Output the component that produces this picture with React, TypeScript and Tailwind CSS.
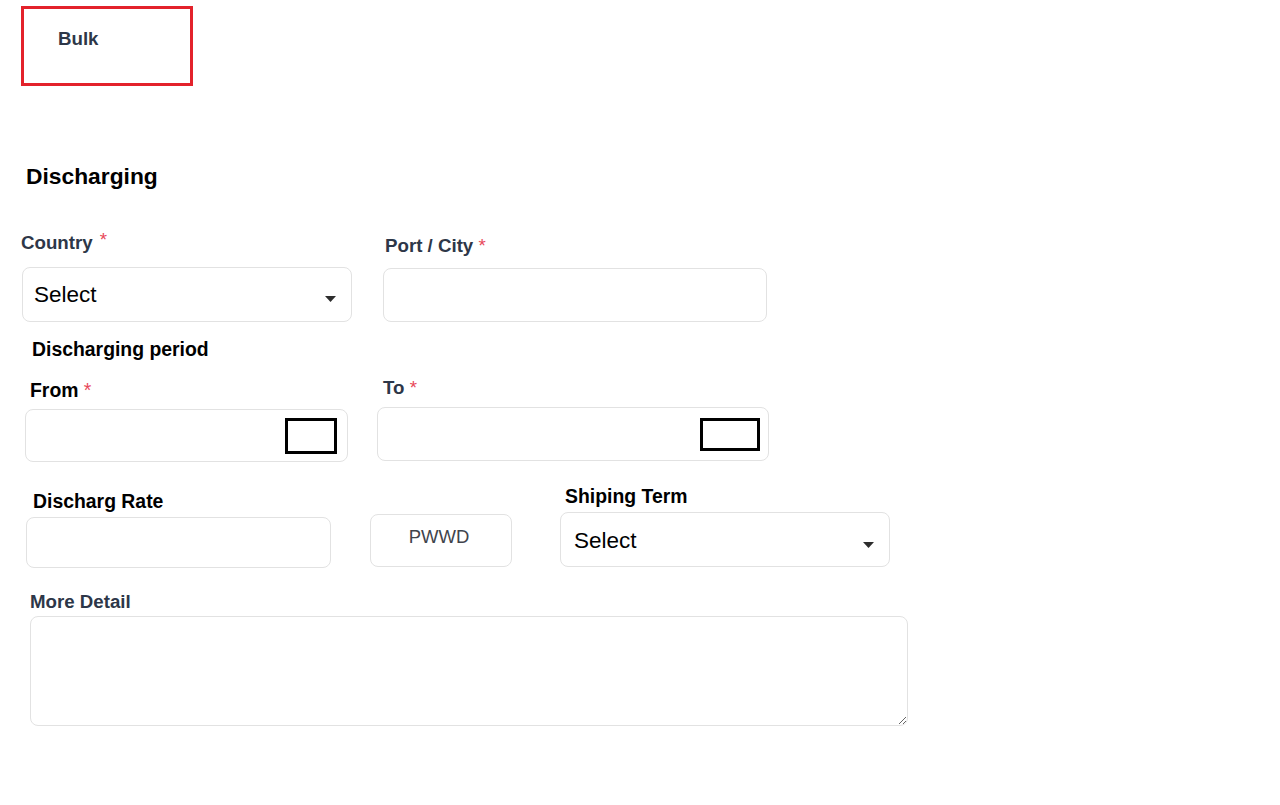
import React from "react";

const Star = () => (
  <span className="font-normal text-[#e8485a]"> *</span>
);

const Caret = () => (
  <svg width="11" height="6" viewBox="0 0 11 6" className="ml-auto mt-[12px] shrink-0">
    <path d="M0 0 L11 0 L5.5 6 Z" fill="#2d2d2d" />
  </svg>
);

export default function App() {
  return (
    <div
      className="w-full h-[805px] bg-white flex flex-col items-start overflow-hidden"
      style={{ fontFamily: '"Liberation Sans", Arial, sans-serif' }}
    >
      {/* Bulk box */}
      <div className="mt-[6px] ml-[21px] w-[172px] h-[80px] border-[3px] border-[#e3222b] pt-[21px] pl-[34px]">
        <div className="text-[18.7px] leading-none font-bold text-[#2d3748]">Bulk</div>
      </div>

      {/* Heading */}
      <div className="mt-[79px] ml-[26px] text-[22.8px] leading-none font-bold text-black">
        Discharging
      </div>

      {/* Country / Port row */}
      <div className="mt-[46px] flex items-start">
        <div className="ml-[21px] flex flex-col items-start">
          <div className="text-[18.7px] leading-none font-bold text-[#2d3748]">
            Country{" "}
            <span className="font-normal text-[#e8485a] relative top-[-3px] ml-[2px]">*</span>
          </div>
          <div className="mt-[14px] ml-[1px] w-[330px] h-[55px] border border-[#e2e2e2] rounded-lg flex items-start pt-[16px] pl-[11px] pr-[15px]">
            <span className="text-[22.5px] leading-none text-black">Select</span>
            <Caret />
          </div>
        </div>
        <div className="ml-[31px] mt-[3.5px] flex flex-col items-start">
          <div className="ml-[2px] text-[18.7px] leading-none font-bold text-[#2d3748]">
            Port / City
            <Star />
          </div>
          <div className="mt-[12px] w-[384px] h-[54px] border border-[#e2e2e2] rounded-lg" />
        </div>
      </div>

      {/* Discharging period */}
      <div className="mt-[17.5px] ml-[32px] text-[19.4px] leading-none font-bold text-black">
        Discharging period
      </div>

      {/* From / To row */}
      <div className="mt-[20px] flex items-start">
        <div className="ml-[25px] mt-[2px] flex flex-col items-start">
          <div className="ml-[5px] text-[19.4px] leading-none font-bold text-black">
            From
            <Star />
          </div>
          <div className="mt-[9px] w-[323px] h-[53px] border border-[#e2e2e2] rounded-lg flex justify-end items-start pt-[8px] pr-[10px]">
            <div className="w-[52px] h-[36px] border-[3px] border-black" />
          </div>
        </div>
        <div className="ml-[29px] flex flex-col items-start">
          <div className="ml-[6px] text-[18.7px] leading-none font-bold text-[#2d3748]">
            To
            <Star />
          </div>
          <div className="mt-[9.5px] w-[392px] h-[54px] border border-[#e2e2e2] rounded-lg flex justify-end items-start pt-[10px] pr-[8px]">
            <div className="w-[60px] h-[33px] border-[3px] border-black" />
          </div>
        </div>
      </div>

      {/* Rate / PWWD / Shipping row */}
      <div className="mt-[24.5px] flex items-start">
        <div className="ml-[26px] mt-[5px] flex flex-col items-start">
          <div className="ml-[7px] text-[19.4px] leading-none font-bold text-black">
            Discharg Rate
          </div>
          <div className="mt-[6px] w-[305px] h-[51px] border border-[#e2e2e2] rounded-lg" />
        </div>
        <div className="ml-[39px] mt-[27px] w-[142px] h-[53px] border border-[#e2e2e2] rounded-lg flex justify-center pt-[13.5px] pr-[4px]">
          <span className="text-[18.5px] leading-none text-[#3f444c]">PWWD</span>
        </div>
        <div className="ml-[48px] flex flex-col items-start">
          <div className="ml-[5px] text-[19.4px] leading-none font-bold text-black">
            Shiping Term
          </div>
          <div className="mt-[6px] w-[330px] h-[55px] border border-[#e2e2e2] rounded-lg flex items-start pt-[16.5px] pl-[13px] pr-[15px]">
            <span className="text-[22.5px] leading-none text-black">Select</span>
            <Caret />
          </div>
        </div>
      </div>

      {/* More Detail */}
      <div className="mt-[24.5px] ml-[30px] flex flex-col items-start">
        <div className="text-[18.7px] leading-none font-bold text-[#2d3748]">More Detail</div>
        <textarea className="mt-[5px] w-[878px] h-[110px] border border-[#e2e2e2] rounded-lg resize-y outline-none block" />
      </div>
    </div>
  );
}
